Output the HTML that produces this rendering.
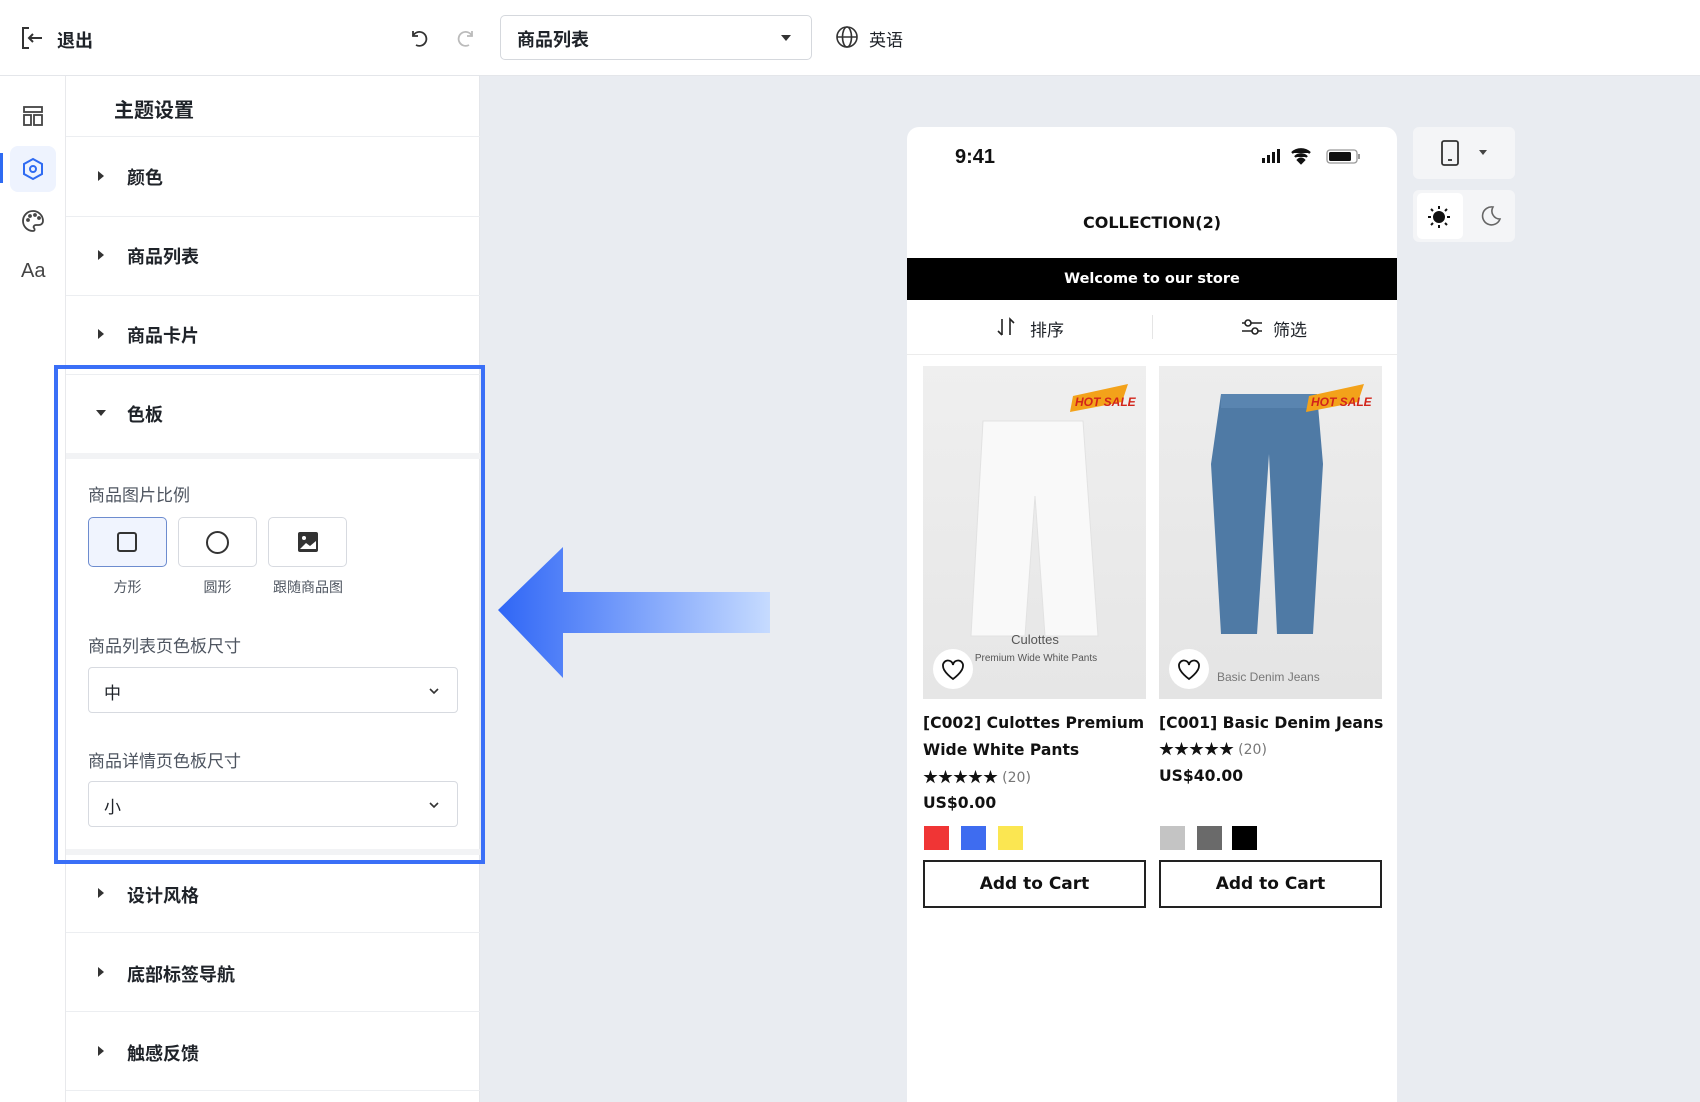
<!DOCTYPE html>
<html><head><meta charset="utf-8"><style>
*{box-sizing:border-box;margin:0;padding:0}
body{width:1700px;height:1102px;overflow:hidden;background:#e9ecf1;font-family:"Liberation Sans","Noto Sans CJK SC",sans-serif;color:#1f2329;position:relative}
.a{position:absolute}
.top{left:0;top:0;width:1700px;height:76px;background:#fff;border-bottom:1px solid #e4e6ea}
.col{left:0;top:76px;width:66px;height:1026px;background:#fff;border-right:1px solid #e8e9ec}
.panel{left:66px;top:76px;width:414px;height:1026px;background:#fff;border-right:1px solid #e4e6ea}
.row{position:absolute;left:66px;width:414px;border-bottom:1px solid #eceef1}
.rt{position:absolute;font-size:18px;font-weight:bold;color:#1f2329}
.tri{position:absolute;width:0;height:0;border-top:5px solid transparent;border-bottom:5px solid transparent;border-left:6px solid #333}
.lbl{position:absolute;font-size:17px;color:#4e5560}
.sel{position:absolute;left:88px;width:370px;height:46px;border:1px solid #d7dae0;border-radius:4px;background:#fff}
.opt{position:absolute;top:517px;width:79px;height:50px;border:1px solid #d7dae0;border-radius:5px;background:#fff}
.ol{position:absolute;top:577px;font-size:14px;color:#4e5560;text-align:center;width:79px}
.phone{left:907px;top:127px;width:490px;height:975px;background:#fff;border-radius:12px 12px 0 0}
.card{position:absolute;width:223px}
.img{position:absolute;left:0;top:0;width:223px;height:333px;background:#ececec}
.tt{font-family:"DejaVu Sans",sans-serif;font-weight:bold;font-size:15.6px;color:#111;line-height:27px;white-space:nowrap}
.btn{position:absolute;width:223px;height:48px;border:2px solid #222;text-align:center;line-height:44px;font-family:"DejaVu Sans",sans-serif;font-weight:bold;font-size:17px;color:#111}
.sw{position:absolute;width:25px;height:24px}
.heart{position:absolute;width:40px;height:40px;border-radius:50%;background:#fff}
.box{background:#f4f5f7;border-radius:6px}
.st{position:absolute;left:0;font-size:15px;color:#111;letter-spacing:0}
</style></head><body>
<div class="a top"></div>
<svg class="a" style="left:20px;top:25px" width="26" height="26" viewBox="0 0 26 26" fill="none" stroke="#333" stroke-width="2"><path d="M9 3H3v20h6"/><path d="M22 13H9M13 9l-4 4 4 4"/></svg>
<div class="a" style="left:57px;top:27px;font-size:18px;font-weight:bold">退出</div>
<svg class="a" style="left:407px;top:26px" width="24" height="24" viewBox="0 0 24 24" fill="none" stroke="#333" stroke-width="1.8"><path d="M6 5v5h5"/><path d="M6 10a7 7 0 1 1 3 9"/></svg>
<svg class="a" style="left:454px;top:26px" width="24" height="24" viewBox="0 0 24 24" fill="none" stroke="#bbb" stroke-width="1.8"><path d="M18 5v5h-5"/><path d="M18 10a7 7 0 1 0-3 9"/></svg>
<div class="a" style="left:500px;top:15px;width:312px;height:45px;border:1px solid #d5d8dd;border-radius:5px;background:#fff"></div>
<div class="a" style="left:517px;top:26px;font-size:18px;font-weight:bold">商品列表</div>
<div class="a" style="left:781px;top:35px;border-left:5px solid transparent;border-right:5px solid transparent;border-top:6px solid #333"></div>
<svg class="a" style="left:835px;top:25px" width="24" height="24" viewBox="0 0 24 24" fill="none" stroke="#333" stroke-width="1.6"><circle cx="12" cy="12" r="10"/><ellipse cx="12" cy="12" rx="4.5" ry="10"/><path d="M2 12h20"/></svg>
<div class="a" style="left:869px;top:26px;font-size:17px">英语</div>

<div class="a col"></div>
<svg class="a" style="left:21px;top:104px" width="24" height="24" viewBox="0 0 24 24" fill="none" stroke="#444" stroke-width="1.8"><rect x="3" y="3" width="18" height="5"/><rect x="3" y="11" width="7" height="10"/><rect x="13" y="11" width="8" height="10"/></svg>
<div class="a" style="left:0;top:153px;width:3px;height:30px;background:#2f6bf2"></div>
<div class="a" style="left:10px;top:146px;width:46px;height:46px;background:#eef3fe;border-radius:8px"></div>
<svg class="a" style="left:21px;top:157px" width="24" height="24" viewBox="0 0 24 24" fill="none" stroke="#2f6bf2" stroke-width="2"><path d="M12 2l9 5v10l-9 5-9-5V7z"/><circle cx="12" cy="12" r="3"/></svg>
<svg class="a" style="left:21px;top:209px" width="24" height="24" viewBox="0 0 24 24" fill="none" stroke="#444" stroke-width="1.8"><path d="M12 2a10 10 0 0 0 0 20c2 0 2-2 1-3s0-3 2-3h3a4 4 0 0 0 4-4C22 6 17 2 12 2z"/><circle cx="7" cy="11" r="1"/><circle cx="9" cy="7" r="1"/><circle cx="14" cy="6" r="1"/><circle cx="18" cy="9" r="1"/></svg>
<div class="a" style="left:21px;top:260px;font-size:20px;color:#444">Aa</div>

<div class="a panel"></div>
<div class="row" style="top:76px;height:61px"></div>
<div class="rt" style="left:114px;top:94px;font-size:20px">主题设置</div>
<div class="row" style="top:137px;height:80px"></div><div class="tri" style="left:98px;top:171px"></div><div class="rt" style="left:127px;top:164px">颜色</div>
<div class="row" style="top:217px;height:79px"></div><div class="tri" style="left:98px;top:250px"></div><div class="rt" style="left:127px;top:243px">商品列表</div>
<div class="row" style="top:296px;height:79px"></div><div class="tri" style="left:98px;top:329px"></div><div class="rt" style="left:127px;top:322px">商品卡片</div>
<div class="a" style="left:96px;top:410px;border-left:5px solid transparent;border-right:5px solid transparent;border-top:6px solid #333"></div><div class="rt" style="left:127px;top:401px">色板</div>
<div class="a" style="left:66px;top:453px;width:414px;height:6px;background:#f2f3f5"></div>
<div class="lbl" style="left:88px;top:481px">商品图片比例</div>
<div class="opt" style="left:88px;background:#f0f4fe;border-color:#6d8ccf"></div>
<div class="a" style="left:117px;top:532px;width:20px;height:20px;border:2px solid #333;border-radius:3px"></div>
<div class="opt" style="left:178px"></div>
<div class="a" style="left:206px;top:531px;width:23px;height:23px;border:2px solid #333;border-radius:50%"></div>
<div class="opt" style="left:268px"></div>
<svg class="a" style="left:297px;top:531px" width="22" height="22" viewBox="0 0 22 22"><rect x="1" y="1" width="20" height="20" rx="2" fill="#333"/><path d="M3 18l6-6 4 3 6-5v8z" fill="#fff"/><circle cx="7" cy="7" r="2" fill="#fff"/></svg>
<div class="ol" style="left:88px">方形</div><div class="ol" style="left:178px">圆形</div><div class="ol" style="left:266px;width:84px">跟随商品图</div>
<div class="lbl" style="left:88px;top:632px">商品列表页色板尺寸</div>
<div class="sel" style="top:667px"></div><div class="a" style="left:104px;top:679px;font-size:17px">中</div>
<svg class="a" style="left:427px;top:684px" width="14" height="14" viewBox="0 0 14 14" fill="none" stroke="#333" stroke-width="1.6"><path d="M3 5l4 4 4-4"/></svg>
<div class="lbl" style="left:88px;top:747px">商品详情页色板尺寸</div>
<div class="sel" style="top:781px"></div><div class="a" style="left:104px;top:793px;font-size:17px">小</div>
<svg class="a" style="left:427px;top:798px" width="14" height="14" viewBox="0 0 14 14" fill="none" stroke="#333" stroke-width="1.6"><path d="M3 5l4 4 4-4"/></svg>
<div class="a" style="left:66px;top:849px;width:414px;height:6px;background:#f2f3f5"></div>
<div class="a" style="left:54px;top:365px;width:431px;height:499px;border:4px solid #3a6ff7"></div>
<div class="row" style="top:864px;height:69px"></div><div class="tri" style="left:98px;top:888px"></div><div class="rt" style="left:127px;top:882px">设计风格</div>
<div class="row" style="top:933px;height:79px"></div><div class="tri" style="left:98px;top:967px"></div><div class="rt" style="left:127px;top:961px">底部标签导航</div>
<div class="row" style="top:1012px;height:79px"></div><div class="tri" style="left:98px;top:1046px"></div><div class="rt" style="left:127px;top:1040px">触感反馈</div>

<svg class="a" style="left:490px;top:540px" width="290" height="150"><defs><linearGradient id="g" x1="0" x2="1"><stop offset="0" stop-color="#2f66f6"/><stop offset="1" stop-color="#c6dbff"/></linearGradient></defs><path d="M8 70L73 7V52H280V93H73V138z" fill="url(#g)"/></svg>

<div class="a phone"></div>
<div class="a" style="left:955px;top:146px;font-size:20px;font-weight:bold;color:#111">9:41</div>
<svg class="a" style="left:1262px;top:148px" width="100" height="20"><rect x="0" y="10" width="3" height="5" fill="#111"/><rect x="5" y="7" width="3" height="8" fill="#111"/><rect x="10" y="4" width="3" height="11" fill="#111"/><rect x="15" y="1" width="3" height="14" fill="#111"/><path d="M30 5a13 13 0 0 1 18 0M33 9a8 8 0 0 1 12 0M39 15l-3-3a4 4 0 0 1 6 0z" stroke="#111" stroke-width="2.4" fill="#111"/><rect x="65" y="2" width="30" height="13" rx="3" fill="none" stroke="#999" stroke-width="1.3"/><rect x="67" y="4" width="22" height="9" rx="1.5" fill="#111"/><rect x="96" y="6" width="2" height="5" fill="#999"/></svg>
<div class="a" style="left:907px;top:213px;width:490px;text-align:center;font-family:'DejaVu Sans',sans-serif;font-weight:bold;font-size:16px;color:#111">COLLECTION(2)</div>
<div class="a" style="left:907px;top:258px;width:490px;height:42px;background:#000;color:#fff;text-align:center;line-height:42px;font-family:'DejaVu Sans',sans-serif;font-weight:bold;font-size:14.5px">Welcome to our store</div>
<div class="a" style="left:907px;top:300px;width:490px;height:55px;border-bottom:1px solid #ececec"></div>
<div class="a" style="left:1152px;top:315px;width:1px;height:24px;background:#e5e5e5"></div>
<svg class="a" style="left:996px;top:317px" width="22" height="20" fill="none" stroke="#222" stroke-width="1.6"><path d="M6 2v16M2 14l4 4M14 18V2l4 4"/></svg>
<div class="a" style="left:1030px;top:316px;font-size:17px">排序</div>
<svg class="a" style="left:1240px;top:317px" width="24" height="20" fill="none" stroke="#222" stroke-width="1.6"><path d="M2 6h20M2 14h20"/><circle cx="8" cy="6" r="3" fill="#fff"/><circle cx="15" cy="14" r="3" fill="#fff"/></svg>
<div class="a" style="left:1273px;top:316px;font-size:17px">筛选</div>

<div class="card" style="left:923px;top:366px">
 <div class="img" style="background:linear-gradient(#efefef,#e6e6e6)"></div>
 <svg class="a" style="left:0;top:0" width="223" height="333"><path d="M60 55h100l15 215H122l-10-140-10 140H48z" fill="#f9f9f9" stroke="#e2e2e2"/><path d="M150 30l55-12-6 18-52 10z" fill="#f3a21a"/><text x="152" y="40" font-size="12" font-weight="bold" fill="#d2241a" font-style="italic" font-family="Liberation Sans">HOT SALE</text><text x="112" y="278" text-anchor="middle" font-size="13" fill="#555" font-family="Liberation Sans">Culottes</text><text x="113" y="295" text-anchor="middle" font-size="10" fill="#555" font-family="Liberation Sans">Premium Wide White Pants</text></svg>
 <div class="heart" style="left:10px;top:283px"></div>
 <svg class="a" style="left:18px;top:293px" width="24" height="22" fill="none" stroke="#111" stroke-width="1.8"><path d="M12 20S2 13 2 7a5 5 0 0 1 10-1 5 5 0 0 1 10 1c0 6-10 13-10 13z"/></svg>
 <div class="a tt" style="left:0;top:344px">[C002] Culottes Premium<br>Wide White Pants</div>
 <div class="st" style="top:400px">★★★★★ <span style="color:#777;font-size:14px;font-family:'DejaVu Sans'">(20)</span></div>
 <div class="a tt" style="left:0;top:424px">US$0.00</div>
 <div class="sw" style="left:1px;top:460px;background:#f03535"></div><div class="sw" style="left:38px;top:460px;background:#3e6cf0"></div><div class="sw" style="left:75px;top:460px;background:#fbe651"></div>
 <div class="btn" style="left:0;top:494px">Add to Cart</div>
</div>
<div class="card" style="left:1159px;top:366px">
 <div class="img" style="background:linear-gradient(#ededed,#e4e4e4)"></div>
 <svg class="a" style="left:0;top:0" width="223" height="333"><path d="M62 28h96l6 70-10 170H118l-8-180-12 180H62l-10-170z" fill="#4f7aa5"/><path d="M62 28h96v14H62z" fill="#5a85b0"/><path d="M150 30l55-12-6 18-52 10z" fill="#f3a21a"/><text x="152" y="40" font-size="12" font-weight="bold" fill="#d2241a" font-style="italic" font-family="Liberation Sans">HOT SALE</text><text x="58" y="315" font-size="12" fill="#777" font-family="Liberation Sans">Basic Denim Jeans</text></svg>
 <div class="heart" style="left:10px;top:283px"></div>
 <svg class="a" style="left:18px;top:293px" width="24" height="22" fill="none" stroke="#111" stroke-width="1.8"><path d="M12 20S2 13 2 7a5 5 0 0 1 10-1 5 5 0 0 1 10 1c0 6-10 13-10 13z"/></svg>
 <div class="a tt" style="left:0;top:344px">[C001] Basic Denim Jeans</div>
 <div class="st" style="top:372px">★★★★★ <span style="color:#777;font-size:14px;font-family:'DejaVu Sans'">(20)</span></div>
 <div class="a tt" style="left:0;top:397px">US$40.00</div>
 <div class="sw" style="left:1px;top:460px;background:#c4c4c4"></div><div class="sw" style="left:38px;top:460px;background:#6a6a6a"></div><div class="sw" style="left:73px;top:460px;background:#000"></div>
 <div class="btn" style="left:0;top:494px">Add to Cart</div>
</div>

<div class="a box" style="left:1413px;top:127px;width:102px;height:52px"></div>
<svg class="a" style="left:1440px;top:140px" width="20" height="26" fill="none" stroke="#333" stroke-width="1.8"><rect x="2" y="1" width="16" height="24" rx="2"/><path d="M8 20h4"/></svg>
<div class="a" style="left:1479px;top:150px;border-left:4px solid transparent;border-right:4px solid transparent;border-top:5px solid #444"></div>
<div class="a box" style="left:1413px;top:190px;width:102px;height:52px"></div>
<div class="a" style="left:1417px;top:193px;width:46px;height:46px;background:#fff;border-radius:5px"></div>
<svg class="a" style="left:1426px;top:204px" width="26" height="26" stroke="#111" stroke-width="2"><circle cx="13" cy="13" r="5" fill="#111"/><path d="M13 2v3M13 21v3M2 13h3M21 13h3M5 5l2 2M19 19l2 2M5 21l2-2M19 7l2-2"/></svg>
<svg class="a" style="left:1478px;top:204px" width="24" height="24" fill="none" stroke="#666" stroke-width="1.6"><path d="M15 3a9 9 0 1 0 7 12A8 8 0 0 1 15 3z"/></svg>
</body></html>
